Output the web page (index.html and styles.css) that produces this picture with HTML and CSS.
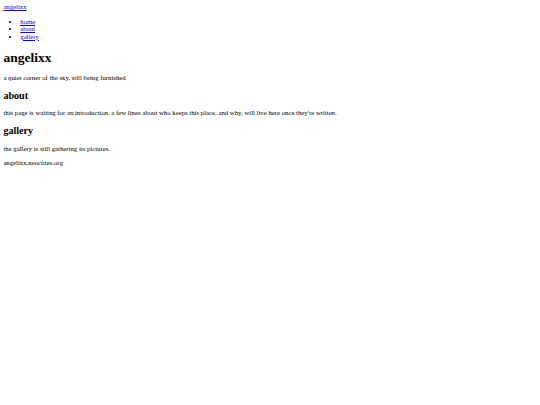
FILE: index.html
```html
<!DOCTYPE html>
<html>
<head>
<meta charset="utf-8">
<title>angelixx</title>
<link rel="stylesheet" href="styles.css">
</head>
<body>
<header class="site-header">
<a class="brand" href="#">angelixx</a>
<nav>
<ul class="nav-list">
<li><a href="#">home</a></li>
<li><a href="#">about</a></li>
<li><a href="#">gallery</a></li>
</ul>
</nav>
</header>
<main>
<h1 class="title">angelixx</h1>
<p class="text">a quiet corner of the sky, still being furnished</p>
<section>
<h2 class="heading">about</h2>
<p class="text">this page is waiting for an introduction. a few lines about who keeps this place, and why, will live here once they're written.</p>
</section>
<section>
<h2 class="heading">gallery</h2>
<p class="text">the gallery is still gathering its pictures.</p>
</section>
</main>
<footer>
<p class="text">angelixx.neocities.org</p>
</footer>
</body>
</html>
```
FILE: styles.css
```css
html {
  background: #fff;
}
body {
  margin: 3.375px;
  font-family: "Liberation Serif", "Times New Roman", serif;
  font-size: 6.75px;
  line-height: 7.6px;
  color: #000;
}
a {
  color: #0000ee;
}
.nav-list {
  margin: 6.75px 0;
  padding-left: 16.875px;
}
.title {
  font-size: 13.5px;
  line-height: 15px;
  margin: 9.045px 0;
}
.heading {
  font-size: 10.125px;
  line-height: 11.2px;
  margin: 8.4px 0;
}
.text {
  margin: 6.75px 0;
}
```
